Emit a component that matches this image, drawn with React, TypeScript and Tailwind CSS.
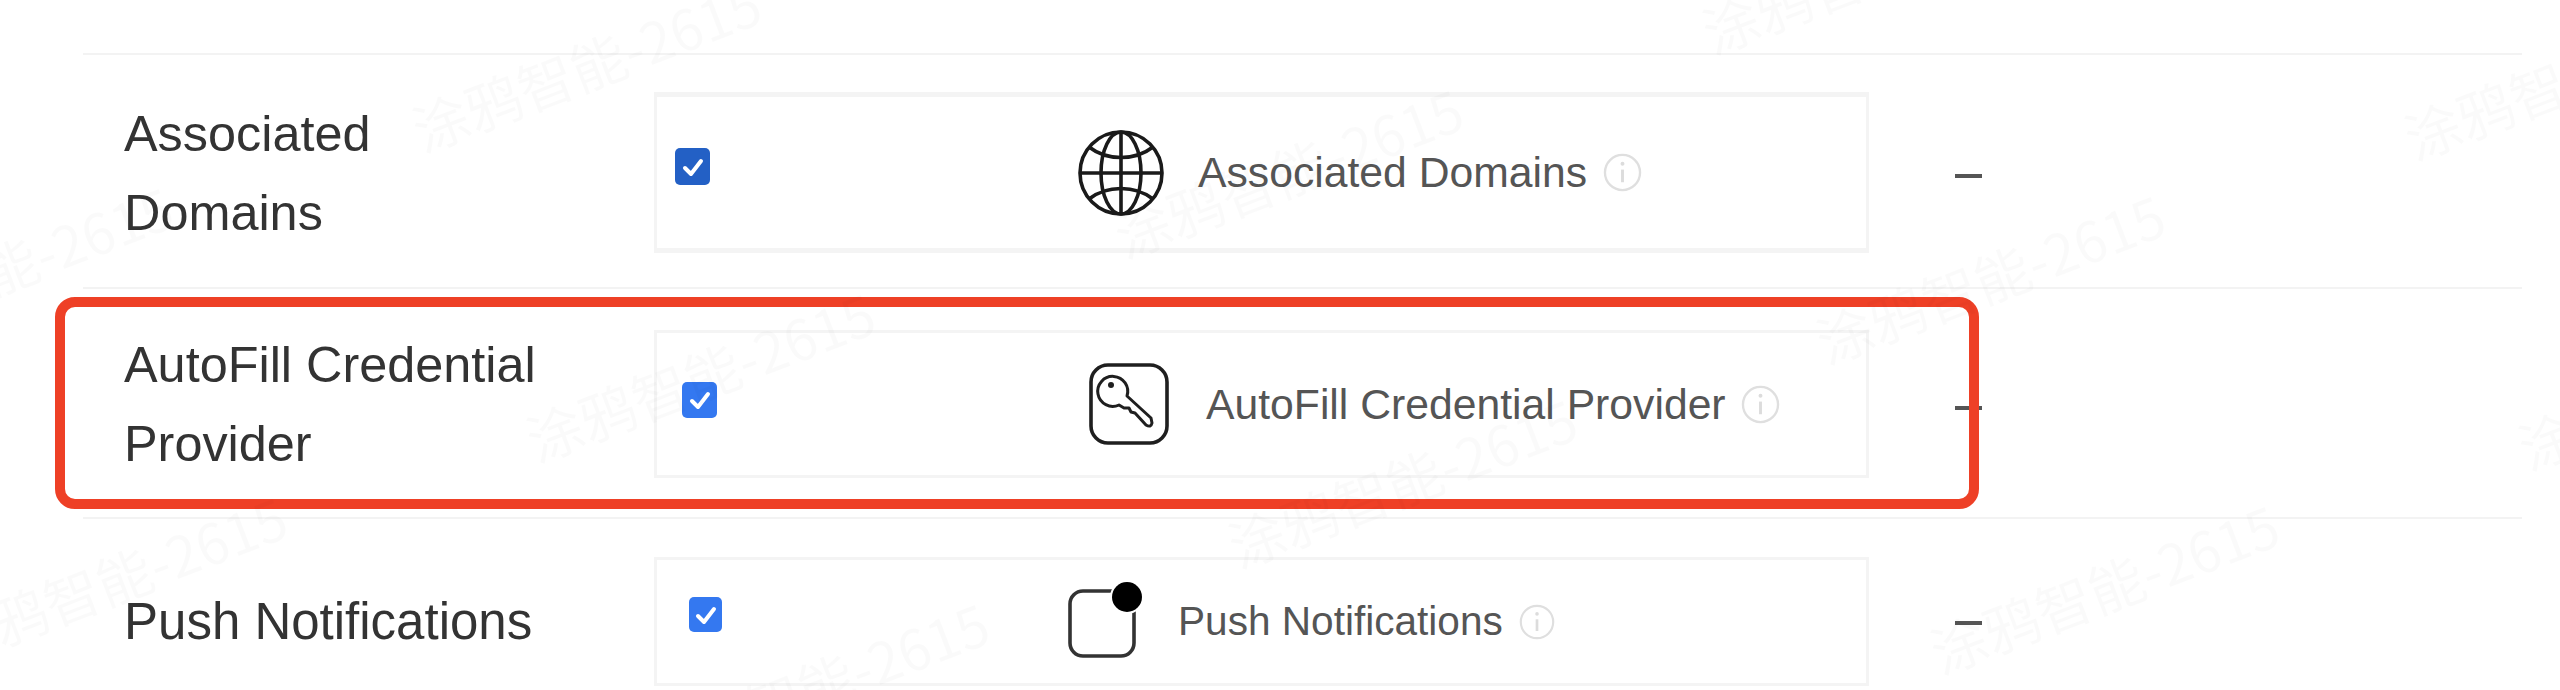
import type { ReactNode } from "react";

function GlobeIcon() {
  return (
    <svg width="88" height="90" viewBox="0 0 88 90" fill="none" stroke="#1a1a1a" strokeWidth="3.6" className="shrink-0">
      <circle cx="44" cy="45" r="41" />
      <ellipse cx="44" cy="45" rx="20" ry="41" />
      <path d="M44 4V86M3 45H85" />
      <path d="M12 19C30 33 58 33 76 19" />
      <path d="M12 71C30 57 58 57 76 71" />
    </svg>
  );
}

function KeyIcon() {
  return (
    <svg width="80" height="82" viewBox="0 0 80 82" fill="none" stroke="#1f1f1f" className="shrink-0">
      <rect x="2" y="2" width="76" height="78" rx="17" strokeWidth="3.6" />
      <path
        d="M38 33A15 15 0 1 0 30 42L35 45L40 45L42 49L46 50L57 62Q62 65 63 60L62 55Z"
        strokeWidth="3"
        strokeLinejoin="round"
      />
      <circle cx="22" cy="22" r="3" fill="#1f1f1f" stroke="none" />
    </svg>
  );
}

function PushIcon() {
  return (
    <svg width="84" height="86" viewBox="0 0 84 86" fill="none" className="shrink-0">
      <rect x="2" y="19" width="64" height="65" rx="13" stroke="#333" strokeWidth="3.6" />
      <circle cx="59" cy="25" r="17" fill="#fff" />
      <circle cx="59" cy="25" r="15" fill="#000" />
    </svg>
  );
}

function InfoIcon({ size }: { size: number }) {
  return (
    <svg width={size} height={size} viewBox="0 0 40 40" fill="none" className="shrink-0">
      <circle cx="20" cy="20" r="18" stroke="#dfdfdf" strokeWidth="2.4" />
      <path d="M20 17V30" stroke="#dcdcdc" strokeWidth="3" />
      <circle cx="20" cy="11" r="2" fill="#dcdcdc" />
    </svg>
  );
}

function CheckBox({ className }: { className: string }) {
  return (
    <div className={`shrink-0 flex items-center justify-center rounded-[5px] ${className}`}>
      <svg width="24" height="24" viewBox="0 0 24 24" fill="none" stroke="#fff" strokeWidth="4" strokeLinecap="round" strokeLinejoin="round">
        <path d="M4 13L10 19L20 6" />
      </svg>
    </div>
  );
}

type RowProps = {
  label: string;
  rowClass: string;
  labelClass: string;
  boxClass: string;
  checkClass: string;
  iconWrap: string;
  textClass: string;
  infoSize: number;
  dashClass: string;
  icon: ReactNode;
};

function Row({ label, rowClass, labelClass, boxClass, checkClass, iconWrap, textClass, infoSize, dashClass, icon }: RowProps) {
  return (
    <div className={rowClass}>
      <div className="flex items-center">
        <div className="w-[571px] pl-[41px] shrink-0">
          <div className={`w-[440px] leading-[79px] text-[#333] ${labelClass}`}>{label}</div>
        </div>
        <div className={`w-[1215px] shrink-0 border-[#f4f4f4] flex items-center ${boxClass}`}>
          <CheckBox className={checkClass} />
          <div className={iconWrap}>{icon}</div>
          <span className={`text-[#555] whitespace-nowrap ${textClass}`}>{label}</span>
          <InfoIcon size={infoSize} />
        </div>
        <div className={`ml-[86px] w-[27px] h-[4px] bg-[#555] ${dashClass}`} />
      </div>
    </div>
  );
}

const marks: { x: number; y: number }[] = [];
for (let i = -1; i < 5; i++) {
  for (let j = -1; j < 4; j++) {
    marks.push({ x: 592 + i * 702 + j * 114, y: 65 + i * 106 + j * 310 });
  }
}

export default function App() {
  return (
    <div className="relative w-[2560px] h-[690px] overflow-hidden bg-white font-['Liberation_Sans',sans-serif]">
      <div className="ml-[83px] w-[2439px] pt-[53px]">
        <div className="border-t-[2px] border-[#f3f3f3]">
          <Row
            label="Associated Domains"
            rowClass="h-[234px] pt-[37px] border-b-[2px] border-[#f3f3f3]"
            labelClass="text-[50.4px]"
            boxClass="h-[161px] border-x-[3px] border-y-[5px]"
            checkClass="w-[35px] h-[37px] ml-[18px] mb-[12px] bg-[#2360c5]"
            iconWrap="ml-[367px] mr-[33px]"
            textClass="text-[42.7px] mr-[16px]"
            infoSize={39}
            dashClass="mt-[6px]"
            icon={<GlobeIcon />}
          />
          <Row
            label="AutoFill Credential Provider"
            rowClass="h-[230px] pt-[36px] border-b-[2px] border-[#f3f3f3]"
            labelClass="text-[50.4px]"
            boxClass="h-[148px] border-[3px]"
            checkClass="w-[35px] h-[36px] ml-[25px] mb-[8px] bg-[#3478f0]"
            iconWrap="ml-[372px] mr-[37px]"
            textClass="text-[42.7px] mr-[15px]"
            infoSize={39}
            dashClass="mt-[7px]"
            icon={<KeyIcon />}
          />
          <Row
            label="Push Notifications"
            rowClass="pt-[38px]"
            labelClass="text-[51px]"
            boxClass="h-[129px] border-[3px]"
            checkClass="w-[33px] h-[35px] ml-[32px] mb-[14px] bg-[#3478f0]"
            iconWrap="ml-[346px] mr-[26px] mb-[14px]"
            textClass="text-[40.6px] mr-[16px]"
            infoSize={36}
            dashClass="mt-[3px]"
            icon={<PushIcon />}
          />
        </div>
      </div>

      {/* red highlight round the second row */}
      <div className="absolute left-[55px] top-[297px] w-[1924px] h-[212px] border-[10px] border-[#ee4026] rounded-[20px]" />

      {/* watermark */}
      {marks.map((m, i) => (
        <div
          key={i}
          className="absolute whitespace-nowrap text-[56px] leading-none text-black/[0.02] -rotate-[21deg] pointer-events-none font-['Noto_Sans_CJK_SC',sans-serif]"
          style={{ left: m.x - 190, top: m.y - 28 }}
        >
          涂鸦智能-2615
        </div>
      ))}
    </div>
  );
}
